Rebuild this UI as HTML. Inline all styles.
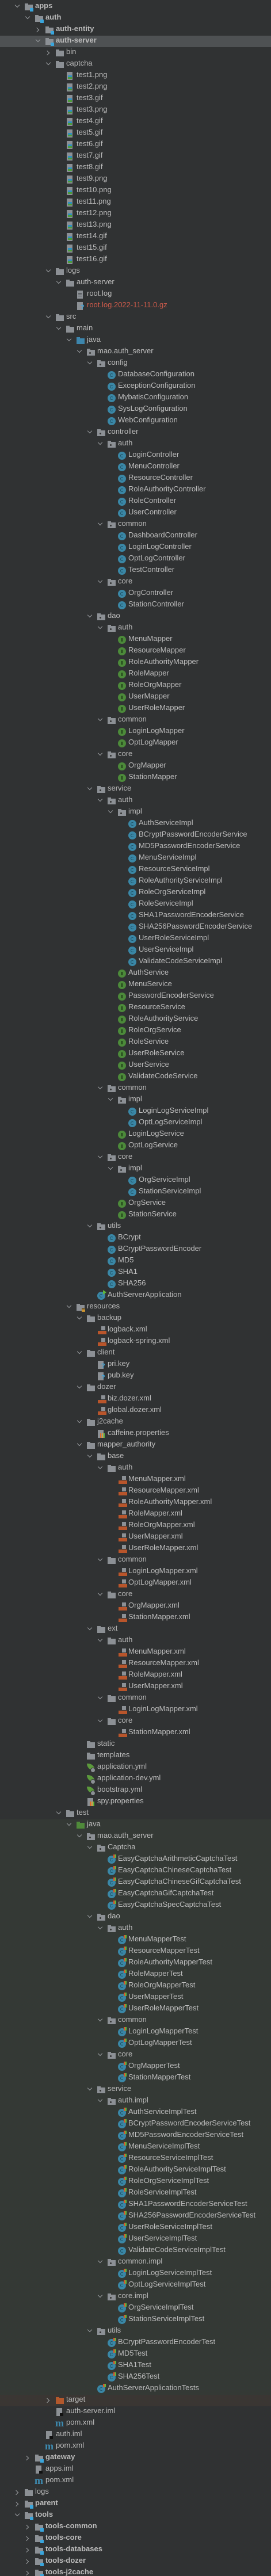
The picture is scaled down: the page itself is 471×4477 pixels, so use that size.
<!DOCTYPE html>
<html><head><meta charset="utf-8"><style>
html,body{margin:0;padding:0;background:#303233;width:471px;height:4477px;overflow:hidden}
body{padding-top:2px;box-sizing:border-box}
.r{position:relative;height:20px;line-height:20px;padding-left:calc(61px + 18px*var(--l));font:13px "Liberation Sans",sans-serif;color:#bbbbbb;white-space:nowrap}
.r i{position:absolute;display:block;font-style:normal}
.r.s{background:#4e5153}
.r.g{background:#343935}
.r.b{background:#3a3633}
.r.bo{font-weight:bold}
.r.red{color:#cf5b4b}
.a{left:calc(27px + 18px*var(--l));width:5px;height:5px;border-right:1.5px solid #9a9da0;border-bottom:1.5px solid #9a9da0}
.a.d{top:4px;transform:rotate(45deg)}
.a.c{top:7px;left:calc(25px + 18px*var(--l));transform:rotate(-45deg)}
.fo,.fm,.fp,.fj,.ft,.fr,.fx{left:calc(43px + 18px*var(--l));top:6px;width:14px;height:10px;background:#8c9095}
.fo:before,.fm:before,.fp:before,.fj:before,.ft:before,.fr:before,.fx:before{content:"";position:absolute;left:0;top:-2px;width:6px;height:2px;background:inherit}
.fm:after{content:"";position:absolute;left:9px;top:6px;width:6px;height:6px;background:#3aa6dd}
.fp:after{content:"";position:absolute;left:4px;top:4px;width:3px;height:3px;border-radius:50%;background:#333}
.fj{background:#3d86ad}
.ft{background:#4f8a3a}
.fx{background:#b3582c}
.fr:after{content:"";position:absolute;left:9px;top:5px;width:6px;height:7px;background:repeating-linear-gradient(#e0a030 0 1px,#303233 1px 2px)}
.ci,.ii,.ct,.ca{left:calc(43px + 18px*var(--l));top:3px;width:14px;height:14px;border-radius:50%;background:#3a87a6}
.ci:after,.ct:after,.ca:after{content:"";position:absolute;left:4px;top:4px;width:4px;height:4px;border:1.3px solid #1f4f62;border-right-color:transparent;border-radius:50%}
.ii{background:#4c8a3a}
.ii:after{content:"";position:absolute;left:6px;top:4px;width:2px;height:6px;background:#1e3a16}
.ct:before{content:"";position:absolute;left:10px;top:-2px;width:5px;height:6px;background:linear-gradient(90deg,#d9532c 50%,#5fb83c 50%)}
.ca:before{content:"";position:absolute;left:10px;top:-3px;width:0;height:0;border-left:6px solid #5fb83c;border-top:4px solid transparent;border-bottom:4px solid transparent}
.fimg,.fl,.fu,.fpr,.fim,.fxm{left:calc(44px + 18px*var(--l));top:3px;width:10px;height:14px;background:#8c9095}
.fimg:after{content:"";position:absolute;left:2px;top:6px;width:7px;height:6px;background:linear-gradient(#2f8fc0 50%,#4c9a3a 50%)}
.fl:after{content:"";position:absolute;left:2px;top:5px;width:6px;height:6px;background:repeating-linear-gradient(#3a3d40 0 1px,#8c9095 1px 2px)}
.fu:after{content:"?";position:absolute;left:6px;top:3px;font:bold 11px "Liberation Sans",sans-serif;color:#3aa6dd;line-height:12px}
.fpr:after{content:"";position:absolute;left:4px;top:6px;width:8px;height:8px;background:linear-gradient(90deg,#e06a2a 0 2px,transparent 2px 3px,#e0a030 3px 5px,transparent 5px 6px,#5fb83c 6px 8px)}
.fim:after{content:"";position:absolute;left:6px;top:9px;width:6px;height:5px;background:#111}
.fxm{background:none}
.fxm:before{content:"";position:absolute;left:6px;top:0;width:7px;height:7px;background:#8c9095}
.fxm:after{content:"";position:absolute;left:0;top:8px;width:15px;height:6px;background:#b9552b}
.fy{left:calc(43px + 18px*var(--l));top:3px;width:14px;height:12px;background:#5c9a3c;border-radius:0 12px 0 12px}
.fy:after{content:"";position:absolute;left:6px;top:7px;width:7px;height:7px;border-radius:50%;background:#8c9095;border:1px solid #303233}
.m{left:calc(42px + 18px*var(--l));top:-1px;font:italic bold 18px "Liberation Serif",serif;color:#3d8cb3;letter-spacing:-1px}
</style></head><body>
<div class="r bo" style="--l:0"><i class="a d"></i><i class="fm"></i>apps</div>
<div class="r bo" style="--l:1"><i class="a d"></i><i class="fm"></i>auth</div>
<div class="r bo" style="--l:2"><i class="a c"></i><i class="fm"></i>auth-entity</div>
<div class="r bo s" style="--l:2"><i class="a d"></i><i class="fm"></i>auth-server</div>
<div class="r" style="--l:3"><i class="a c"></i><i class="fo"></i>bin</div>
<div class="r" style="--l:3"><i class="a d"></i><i class="fo"></i>captcha</div>
<div class="r" style="--l:4"><i class="fimg"></i>test1.png</div>
<div class="r" style="--l:4"><i class="fimg"></i>test2.png</div>
<div class="r" style="--l:4"><i class="fimg"></i>test3.gif</div>
<div class="r" style="--l:4"><i class="fimg"></i>test3.png</div>
<div class="r" style="--l:4"><i class="fimg"></i>test4.gif</div>
<div class="r" style="--l:4"><i class="fimg"></i>test5.gif</div>
<div class="r" style="--l:4"><i class="fimg"></i>test6.gif</div>
<div class="r" style="--l:4"><i class="fimg"></i>test7.gif</div>
<div class="r" style="--l:4"><i class="fimg"></i>test8.gif</div>
<div class="r" style="--l:4"><i class="fimg"></i>test9.png</div>
<div class="r" style="--l:4"><i class="fimg"></i>test10.png</div>
<div class="r" style="--l:4"><i class="fimg"></i>test11.png</div>
<div class="r" style="--l:4"><i class="fimg"></i>test12.png</div>
<div class="r" style="--l:4"><i class="fimg"></i>test13.png</div>
<div class="r" style="--l:4"><i class="fimg"></i>test14.gif</div>
<div class="r" style="--l:4"><i class="fimg"></i>test15.gif</div>
<div class="r" style="--l:4"><i class="fimg"></i>test16.gif</div>
<div class="r" style="--l:3"><i class="a d"></i><i class="fo"></i>logs</div>
<div class="r" style="--l:4"><i class="a d"></i><i class="fo"></i>auth-server</div>
<div class="r" style="--l:5"><i class="fl"></i>root.log</div>
<div class="r red" style="--l:5"><i class="fu"></i>root.log.2022-11-11.0.gz</div>
<div class="r" style="--l:3"><i class="a d"></i><i class="fo"></i>src</div>
<div class="r" style="--l:4"><i class="a d"></i><i class="fo"></i>main</div>
<div class="r" style="--l:5"><i class="a d"></i><i class="fj"></i>java</div>
<div class="r" style="--l:6"><i class="a d"></i><i class="fp"></i>mao.auth_server</div>
<div class="r" style="--l:7"><i class="a d"></i><i class="fp"></i>config</div>
<div class="r" style="--l:8"><i class="ci"></i>DatabaseConfiguration</div>
<div class="r" style="--l:8"><i class="ci"></i>ExceptionConfiguration</div>
<div class="r" style="--l:8"><i class="ci"></i>MybatisConfiguration</div>
<div class="r" style="--l:8"><i class="ci"></i>SysLogConfiguration</div>
<div class="r" style="--l:8"><i class="ci"></i>WebConfiguration</div>
<div class="r" style="--l:7"><i class="a d"></i><i class="fp"></i>controller</div>
<div class="r" style="--l:8"><i class="a d"></i><i class="fp"></i>auth</div>
<div class="r" style="--l:9"><i class="ci"></i>LoginController</div>
<div class="r" style="--l:9"><i class="ci"></i>MenuController</div>
<div class="r" style="--l:9"><i class="ci"></i>ResourceController</div>
<div class="r" style="--l:9"><i class="ci"></i>RoleAuthorityController</div>
<div class="r" style="--l:9"><i class="ci"></i>RoleController</div>
<div class="r" style="--l:9"><i class="ci"></i>UserController</div>
<div class="r" style="--l:8"><i class="a d"></i><i class="fp"></i>common</div>
<div class="r" style="--l:9"><i class="ci"></i>DashboardController</div>
<div class="r" style="--l:9"><i class="ci"></i>LoginLogController</div>
<div class="r" style="--l:9"><i class="ci"></i>OptLogController</div>
<div class="r" style="--l:9"><i class="ci"></i>TestController</div>
<div class="r" style="--l:8"><i class="a d"></i><i class="fp"></i>core</div>
<div class="r" style="--l:9"><i class="ci"></i>OrgController</div>
<div class="r" style="--l:9"><i class="ci"></i>StationController</div>
<div class="r" style="--l:7"><i class="a d"></i><i class="fp"></i>dao</div>
<div class="r" style="--l:8"><i class="a d"></i><i class="fp"></i>auth</div>
<div class="r" style="--l:9"><i class="ii"></i>MenuMapper</div>
<div class="r" style="--l:9"><i class="ii"></i>ResourceMapper</div>
<div class="r" style="--l:9"><i class="ii"></i>RoleAuthorityMapper</div>
<div class="r" style="--l:9"><i class="ii"></i>RoleMapper</div>
<div class="r" style="--l:9"><i class="ii"></i>RoleOrgMapper</div>
<div class="r" style="--l:9"><i class="ii"></i>UserMapper</div>
<div class="r" style="--l:9"><i class="ii"></i>UserRoleMapper</div>
<div class="r" style="--l:8"><i class="a d"></i><i class="fp"></i>common</div>
<div class="r" style="--l:9"><i class="ii"></i>LoginLogMapper</div>
<div class="r" style="--l:9"><i class="ii"></i>OptLogMapper</div>
<div class="r" style="--l:8"><i class="a d"></i><i class="fp"></i>core</div>
<div class="r" style="--l:9"><i class="ii"></i>OrgMapper</div>
<div class="r" style="--l:9"><i class="ii"></i>StationMapper</div>
<div class="r" style="--l:7"><i class="a d"></i><i class="fp"></i>service</div>
<div class="r" style="--l:8"><i class="a d"></i><i class="fp"></i>auth</div>
<div class="r" style="--l:9"><i class="a d"></i><i class="fp"></i>impl</div>
<div class="r" style="--l:10"><i class="ci"></i>AuthServiceImpl</div>
<div class="r" style="--l:10"><i class="ci"></i>BCryptPasswordEncoderService</div>
<div class="r" style="--l:10"><i class="ci"></i>MD5PasswordEncoderService</div>
<div class="r" style="--l:10"><i class="ci"></i>MenuServiceImpl</div>
<div class="r" style="--l:10"><i class="ci"></i>ResourceServiceImpl</div>
<div class="r" style="--l:10"><i class="ci"></i>RoleAuthorityServiceImpl</div>
<div class="r" style="--l:10"><i class="ci"></i>RoleOrgServiceImpl</div>
<div class="r" style="--l:10"><i class="ci"></i>RoleServiceImpl</div>
<div class="r" style="--l:10"><i class="ci"></i>SHA1PasswordEncoderService</div>
<div class="r" style="--l:10"><i class="ci"></i>SHA256PasswordEncoderService</div>
<div class="r" style="--l:10"><i class="ci"></i>UserRoleServiceImpl</div>
<div class="r" style="--l:10"><i class="ci"></i>UserServiceImpl</div>
<div class="r" style="--l:10"><i class="ci"></i>ValidateCodeServiceImpl</div>
<div class="r" style="--l:9"><i class="ii"></i>AuthService</div>
<div class="r" style="--l:9"><i class="ii"></i>MenuService</div>
<div class="r" style="--l:9"><i class="ii"></i>PasswordEncoderService</div>
<div class="r" style="--l:9"><i class="ii"></i>ResourceService</div>
<div class="r" style="--l:9"><i class="ii"></i>RoleAuthorityService</div>
<div class="r" style="--l:9"><i class="ii"></i>RoleOrgService</div>
<div class="r" style="--l:9"><i class="ii"></i>RoleService</div>
<div class="r" style="--l:9"><i class="ii"></i>UserRoleService</div>
<div class="r" style="--l:9"><i class="ii"></i>UserService</div>
<div class="r" style="--l:9"><i class="ii"></i>ValidateCodeService</div>
<div class="r" style="--l:8"><i class="a d"></i><i class="fp"></i>common</div>
<div class="r" style="--l:9"><i class="a d"></i><i class="fp"></i>impl</div>
<div class="r" style="--l:10"><i class="ci"></i>LoginLogServiceImpl</div>
<div class="r" style="--l:10"><i class="ci"></i>OptLogServiceImpl</div>
<div class="r" style="--l:9"><i class="ii"></i>LoginLogService</div>
<div class="r" style="--l:9"><i class="ii"></i>OptLogService</div>
<div class="r" style="--l:8"><i class="a d"></i><i class="fp"></i>core</div>
<div class="r" style="--l:9"><i class="a d"></i><i class="fp"></i>impl</div>
<div class="r" style="--l:10"><i class="ci"></i>OrgServiceImpl</div>
<div class="r" style="--l:10"><i class="ci"></i>StationServiceImpl</div>
<div class="r" style="--l:9"><i class="ii"></i>OrgService</div>
<div class="r" style="--l:9"><i class="ii"></i>StationService</div>
<div class="r" style="--l:7"><i class="a d"></i><i class="fp"></i>utils</div>
<div class="r" style="--l:8"><i class="ci"></i>BCrypt</div>
<div class="r" style="--l:8"><i class="ci"></i>BCryptPasswordEncoder</div>
<div class="r" style="--l:8"><i class="ci"></i>MD5</div>
<div class="r" style="--l:8"><i class="ci"></i>SHA1</div>
<div class="r" style="--l:8"><i class="ci"></i>SHA256</div>
<div class="r" style="--l:7"><i class="ca"></i>AuthServerApplication</div>
<div class="r" style="--l:5"><i class="a d"></i><i class="fr"></i>resources</div>
<div class="r" style="--l:6"><i class="a d"></i><i class="fo"></i>backup</div>
<div class="r" style="--l:7"><i class="fxm"></i>logback.xml</div>
<div class="r" style="--l:7"><i class="fxm"></i>logback-spring.xml</div>
<div class="r" style="--l:6"><i class="a d"></i><i class="fo"></i>client</div>
<div class="r" style="--l:7"><i class="fu"></i>pri.key</div>
<div class="r" style="--l:7"><i class="fu"></i>pub.key</div>
<div class="r" style="--l:6"><i class="a d"></i><i class="fo"></i>dozer</div>
<div class="r" style="--l:7"><i class="fxm"></i>biz.dozer.xml</div>
<div class="r" style="--l:7"><i class="fxm"></i>global.dozer.xml</div>
<div class="r" style="--l:6"><i class="a d"></i><i class="fo"></i>j2cache</div>
<div class="r" style="--l:7"><i class="fpr"></i>caffeine.properties</div>
<div class="r" style="--l:6"><i class="a d"></i><i class="fo"></i>mapper_authority</div>
<div class="r" style="--l:7"><i class="a d"></i><i class="fo"></i>base</div>
<div class="r" style="--l:8"><i class="a d"></i><i class="fo"></i>auth</div>
<div class="r" style="--l:9"><i class="fxm"></i>MenuMapper.xml</div>
<div class="r" style="--l:9"><i class="fxm"></i>ResourceMapper.xml</div>
<div class="r" style="--l:9"><i class="fxm"></i>RoleAuthorityMapper.xml</div>
<div class="r" style="--l:9"><i class="fxm"></i>RoleMapper.xml</div>
<div class="r" style="--l:9"><i class="fxm"></i>RoleOrgMapper.xml</div>
<div class="r" style="--l:9"><i class="fxm"></i>UserMapper.xml</div>
<div class="r" style="--l:9"><i class="fxm"></i>UserRoleMapper.xml</div>
<div class="r" style="--l:8"><i class="a d"></i><i class="fo"></i>common</div>
<div class="r" style="--l:9"><i class="fxm"></i>LoginLogMapper.xml</div>
<div class="r" style="--l:9"><i class="fxm"></i>OptLogMapper.xml</div>
<div class="r" style="--l:8"><i class="a d"></i><i class="fo"></i>core</div>
<div class="r" style="--l:9"><i class="fxm"></i>OrgMapper.xml</div>
<div class="r" style="--l:9"><i class="fxm"></i>StationMapper.xml</div>
<div class="r" style="--l:7"><i class="a d"></i><i class="fo"></i>ext</div>
<div class="r" style="--l:8"><i class="a d"></i><i class="fo"></i>auth</div>
<div class="r" style="--l:9"><i class="fxm"></i>MenuMapper.xml</div>
<div class="r" style="--l:9"><i class="fxm"></i>ResourceMapper.xml</div>
<div class="r" style="--l:9"><i class="fxm"></i>RoleMapper.xml</div>
<div class="r" style="--l:9"><i class="fxm"></i>UserMapper.xml</div>
<div class="r" style="--l:8"><i class="a d"></i><i class="fo"></i>common</div>
<div class="r" style="--l:9"><i class="fxm"></i>LoginLogMapper.xml</div>
<div class="r" style="--l:8"><i class="a d"></i><i class="fo"></i>core</div>
<div class="r" style="--l:9"><i class="fxm"></i>StationMapper.xml</div>
<div class="r" style="--l:6"><i class="fo"></i>static</div>
<div class="r" style="--l:6"><i class="fo"></i>templates</div>
<div class="r" style="--l:6"><i class="fy"></i>application.yml</div>
<div class="r" style="--l:6"><i class="fy"></i>application-dev.yml</div>
<div class="r" style="--l:6"><i class="fy"></i>bootstrap.yml</div>
<div class="r" style="--l:6"><i class="fpr"></i>spy.properties</div>
<div class="r" style="--l:4"><i class="a d"></i><i class="fo"></i>test</div>
<div class="r g" style="--l:5"><i class="a d"></i><i class="ft"></i>java</div>
<div class="r g" style="--l:6"><i class="a d"></i><i class="fp"></i>mao.auth_server</div>
<div class="r g" style="--l:7"><i class="a d"></i><i class="fp"></i>Captcha</div>
<div class="r g" style="--l:8"><i class="ct"></i>EasyCaptchaArithmeticCaptchaTest</div>
<div class="r g" style="--l:8"><i class="ct"></i>EasyCaptchaChineseCaptchaTest</div>
<div class="r g" style="--l:8"><i class="ct"></i>EasyCaptchaChineseGifCaptchaTest</div>
<div class="r g" style="--l:8"><i class="ct"></i>EasyCaptchaGifCaptchaTest</div>
<div class="r g" style="--l:8"><i class="ct"></i>EasyCaptchaSpecCaptchaTest</div>
<div class="r g" style="--l:7"><i class="a d"></i><i class="fp"></i>dao</div>
<div class="r g" style="--l:8"><i class="a d"></i><i class="fp"></i>auth</div>
<div class="r g" style="--l:9"><i class="ct"></i>MenuMapperTest</div>
<div class="r g" style="--l:9"><i class="ct"></i>ResourceMapperTest</div>
<div class="r g" style="--l:9"><i class="ct"></i>RoleAuthorityMapperTest</div>
<div class="r g" style="--l:9"><i class="ct"></i>RoleMapperTest</div>
<div class="r g" style="--l:9"><i class="ct"></i>RoleOrgMapperTest</div>
<div class="r g" style="--l:9"><i class="ct"></i>UserMapperTest</div>
<div class="r g" style="--l:9"><i class="ct"></i>UserRoleMapperTest</div>
<div class="r g" style="--l:8"><i class="a d"></i><i class="fp"></i>common</div>
<div class="r g" style="--l:9"><i class="ct"></i>LoginLogMapperTest</div>
<div class="r g" style="--l:9"><i class="ct"></i>OptLogMapperTest</div>
<div class="r g" style="--l:8"><i class="a d"></i><i class="fp"></i>core</div>
<div class="r g" style="--l:9"><i class="ct"></i>OrgMapperTest</div>
<div class="r g" style="--l:9"><i class="ct"></i>StationMapperTest</div>
<div class="r g" style="--l:7"><i class="a d"></i><i class="fp"></i>service</div>
<div class="r g" style="--l:8"><i class="a d"></i><i class="fp"></i>auth.impl</div>
<div class="r g" style="--l:9"><i class="ct"></i>AuthServiceImplTest</div>
<div class="r g" style="--l:9"><i class="ct"></i>BCryptPasswordEncoderServiceTest</div>
<div class="r g" style="--l:9"><i class="ct"></i>MD5PasswordEncoderServiceTest</div>
<div class="r g" style="--l:9"><i class="ct"></i>MenuServiceImplTest</div>
<div class="r g" style="--l:9"><i class="ct"></i>ResourceServiceImplTest</div>
<div class="r g" style="--l:9"><i class="ct"></i>RoleAuthorityServiceImplTest</div>
<div class="r g" style="--l:9"><i class="ct"></i>RoleOrgServiceImplTest</div>
<div class="r g" style="--l:9"><i class="ct"></i>RoleServiceImplTest</div>
<div class="r g" style="--l:9"><i class="ct"></i>SHA1PasswordEncoderServiceTest</div>
<div class="r g" style="--l:9"><i class="ct"></i>SHA256PasswordEncoderServiceTest</div>
<div class="r g" style="--l:9"><i class="ct"></i>UserRoleServiceImplTest</div>
<div class="r g" style="--l:9"><i class="ct"></i>UserServiceImplTest</div>
<div class="r g" style="--l:9"><i class="ci"></i>ValidateCodeServiceImplTest</div>
<div class="r g" style="--l:8"><i class="a d"></i><i class="fp"></i>common.impl</div>
<div class="r g" style="--l:9"><i class="ct"></i>LoginLogServiceImplTest</div>
<div class="r g" style="--l:9"><i class="ct"></i>OptLogServiceImplTest</div>
<div class="r g" style="--l:8"><i class="a d"></i><i class="fp"></i>core.impl</div>
<div class="r g" style="--l:9"><i class="ct"></i>OrgServiceImplTest</div>
<div class="r g" style="--l:9"><i class="ct"></i>StationServiceImplTest</div>
<div class="r g" style="--l:7"><i class="a d"></i><i class="fp"></i>utils</div>
<div class="r g" style="--l:8"><i class="ct"></i>BCryptPasswordEncoderTest</div>
<div class="r g" style="--l:8"><i class="ct"></i>MD5Test</div>
<div class="r g" style="--l:8"><i class="ct"></i>SHA1Test</div>
<div class="r g" style="--l:8"><i class="ct"></i>SHA256Test</div>
<div class="r g" style="--l:7"><i class="ct"></i>AuthServerApplicationTests</div>
<div class="r b" style="--l:3"><i class="a c"></i><i class="fx"></i>target</div>
<div class="r" style="--l:3"><i class="fim"></i>auth-server.iml</div>
<div class="r" style="--l:3"><i class="m">m</i>pom.xml</div>
<div class="r" style="--l:2"><i class="fim"></i>auth.iml</div>
<div class="r" style="--l:2"><i class="m">m</i>pom.xml</div>
<div class="r bo" style="--l:1"><i class="a c"></i><i class="fm"></i>gateway</div>
<div class="r" style="--l:1"><i class="fim"></i>apps.iml</div>
<div class="r" style="--l:1"><i class="m">m</i>pom.xml</div>
<div class="r" style="--l:0"><i class="a c"></i><i class="fo"></i>logs</div>
<div class="r bo" style="--l:0"><i class="a c"></i><i class="fm"></i>parent</div>
<div class="r bo" style="--l:0"><i class="a d"></i><i class="fm"></i>tools</div>
<div class="r bo" style="--l:1"><i class="a c"></i><i class="fm"></i>tools-common</div>
<div class="r bo" style="--l:1"><i class="a c"></i><i class="fm"></i>tools-core</div>
<div class="r bo" style="--l:1"><i class="a c"></i><i class="fm"></i>tools-databases</div>
<div class="r bo" style="--l:1"><i class="a c"></i><i class="fm"></i>tools-dozer</div>
<div class="r bo" style="--l:1"><i class="a c"></i><i class="fm"></i>tools-j2cache</div>
</body></html>
